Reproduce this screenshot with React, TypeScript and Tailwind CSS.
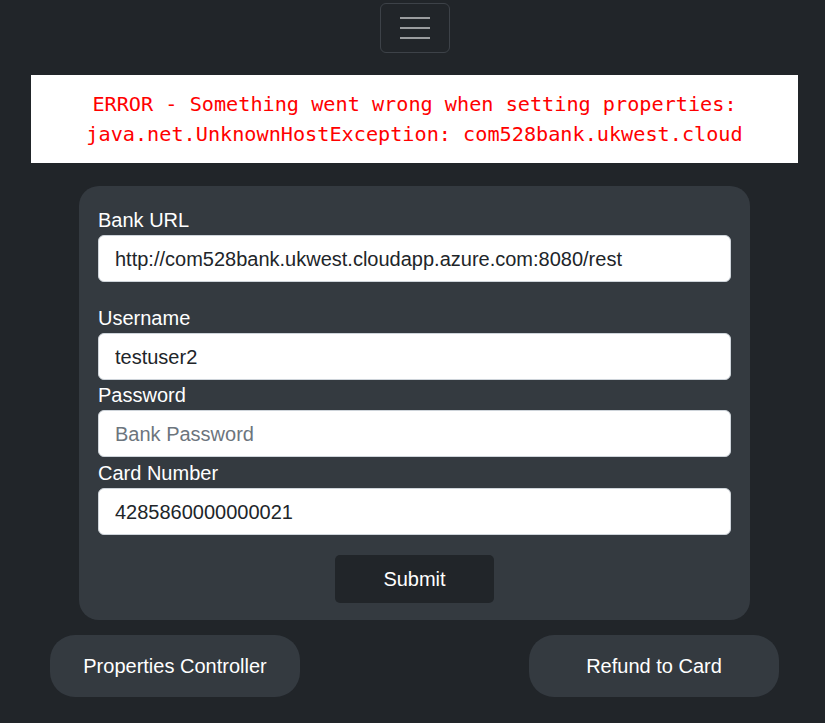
import React from "react";

export default function App() {
  const font = { fontFamily: '"Liberation Sans", Arial, sans-serif' };
  const inputCls =
    "block w-full h-[47px] rounded-[6px] border border-[#ced4da] bg-white px-[16px] pt-[2px] text-[20px] text-[#212529] placeholder:text-[#6c757d] outline-none";
  return (
    <div className="min-h-[723px] w-full bg-[#212529] flex flex-col items-center pl-[4px]" style={font}>
      <div className="pt-[3px]">
        <button className="w-[70px] h-[50px] rounded-[6px] border border-[#3d4248] flex items-center justify-center">
          <svg width="30" height="30" viewBox="0 0 30 30">
            <path d="M0 5h30M0 15h30M0 25h30" stroke="rgba(255,255,255,0.55)" strokeWidth="2" strokeLinecap="round" />
          </svg>
        </button>
      </div>
      <div
        className="mt-[22px] w-[767px] h-[88px] bg-white flex flex-col items-center pt-[14px] text-[#ff0000] text-[20.2px] leading-[30px] overflow-hidden whitespace-pre"
        style={{ fontFamily: '"DejaVu Sans Mono", monospace' }}
      >
        <div>ERROR - Something went wrong when setting properties:</div>
        <div>java.net.UnknownHostException: com528bank.ukwest.cloud</div>
      </div>
      <div className="mt-[23px] w-[671px] rounded-[20px] bg-[#343a40] pt-[20px] px-[19px] pb-[17px]">
        <label className="block h-[29px] leading-[29px] text-white text-[20px]">Bank URL</label>
        <input className={inputCls} defaultValue="http://com528bank.ukwest.cloudapp.azure.com:8080/rest" />
        <label className="block mt-[22px] h-[29px] leading-[29px] text-white text-[20px]">Username</label>
        <input className={inputCls} defaultValue="testuser2" />
        <label className="block mt-[1px] h-[29px] leading-[29px] text-white text-[20px]">Password</label>
        <input className={inputCls} type="password" placeholder="Bank Password" />
        <label className="block mt-[2px] h-[29px] leading-[29px] text-white text-[20px]">Card Number</label>
        <input className={inputCls} defaultValue="4285860000000021" />
        <div className="flex justify-center mt-[20px]">
          <button className="w-[159px] h-[48px] rounded-[5px] bg-[#212529] text-white text-[20px]">Submit</button>
        </div>
      </div>
      <div className="mt-[15px] w-[729px] flex justify-between">
        <button className="w-[250px] h-[62px] rounded-[25px] bg-[#343a40] text-white text-[20px]">Properties Controller</button>
        <button className="w-[250px] h-[62px] rounded-[25px] bg-[#343a40] text-white text-[20px]">Refund to Card</button>
      </div>
    </div>
  );
}
